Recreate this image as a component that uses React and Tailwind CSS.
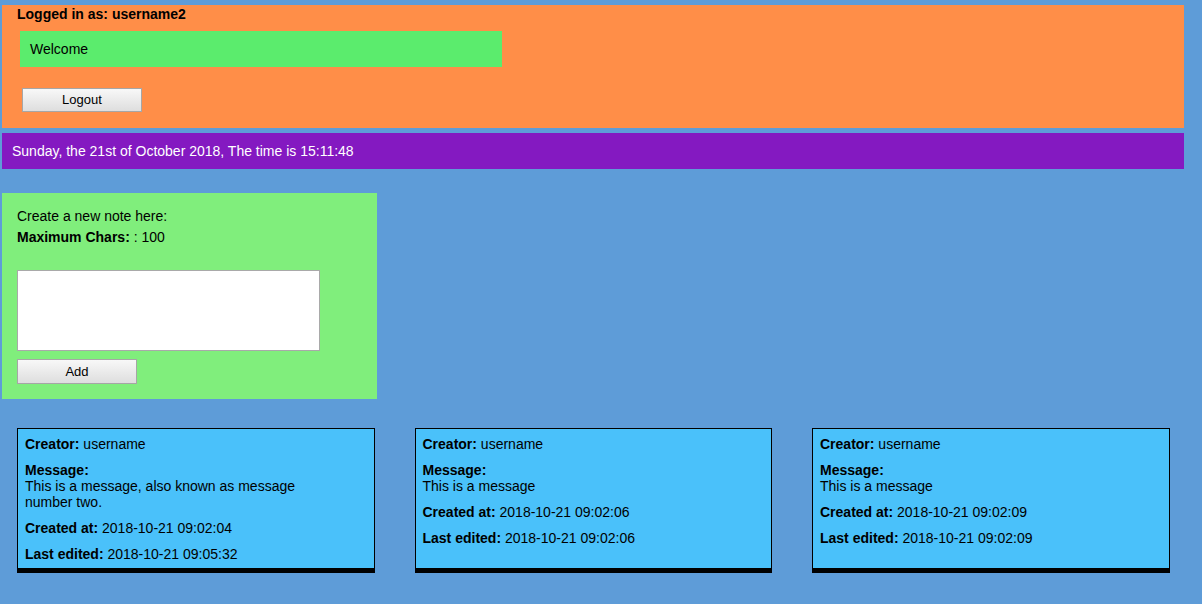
import React from "react";

const notes = [
  {
    creator: "username",
    message: "This is a message, also known as message number two.",
    created: "2018-10-21 09:02:04",
    edited: "2018-10-21 09:05:32",
  },
  {
    creator: "username",
    message: "This is a message",
    created: "2018-10-21 09:02:06",
    edited: "2018-10-21 09:02:06",
  },
  {
    creator: "username",
    message: "This is a message",
    created: "2018-10-21 09:02:09",
    edited: "2018-10-21 09:02:09",
  },
];

const btn =
  "w-[120px] border border-[#a6a6a6] bg-gradient-to-b from-[#f8f8f8] to-[#dedede] text-[13px] text-black";

function NoteCard({ note }) {
  return (
    <div className="w-[357.5px] bg-[#4ac1fa] border border-black border-b-[5px] px-[7px] pt-[7px] pb-[6px] text-[14px] leading-[16px]">
      <p>
        <b>Creator:</b> {note.creator}
      </p>
      <p className="mt-[10px]">
        <b>Message:</b>
      </p>
      <p className="max-w-[290px]">{note.message}</p>
      <p className="mt-[10px]">
        <b>Created at:</b> {note.created}
      </p>
      <p className="mt-[10px]">
        <b>Last edited:</b> {note.edited}
      </p>
    </div>
  );
}

export default function App() {
  return (
    <div className="w-[1202px] h-[604px] bg-[#5e9cd8] pt-[5px] text-black font-['Liberation_Sans',Arial,sans-serif] text-[14px]">
      {/* header */}
      <div className="ml-[2px] w-[1182px] h-[123px] bg-[#ff8e48] pl-[15px] pt-[1px]">
        <div className="font-bold leading-[16px]">Logged in as: username2</div>
        <div className="mt-[9px] ml-[3px] w-[482px] h-[36px] bg-[#5bec6d] flex items-center pl-[10px]">
          Welcome
        </div>
        <button className={`${btn} h-[24px] mt-[21px] ml-[5px]`}>Logout</button>
      </div>

      {/* date bar */}
      <div className="ml-[2px] mt-[5px] w-[1182px] h-[36px] bg-[#8419c1] text-white flex items-center pl-[10px]">
        Sunday, the 21st of October 2018, The time is 15:11:48
      </div>

      {/* new note */}
      <div className="ml-[2px] mt-[24px] w-[375px] h-[206px] bg-[#80ee7c] pl-[15px] pt-[15px]">
        <div className="leading-[16px]">Create a new note here:</div>
        <div className="leading-[16px] mt-[5px]">
          <b>Maximum Chars:</b> : 100
        </div>
        <textarea className="block mt-[25px] w-[303px] h-[81px] bg-white border border-[#a9a9a9] resize-none" />
        <button className={`${btn} h-[25px] mt-[8px]`}>Add</button>
      </div>

      {/* notes */}
      <div className="flex gap-[40px] pl-[17px] mt-[29px] items-stretch">
        {notes.map((n, i) => (
          <NoteCard key={i} note={n} />
        ))}
      </div>
    </div>
  );
}
